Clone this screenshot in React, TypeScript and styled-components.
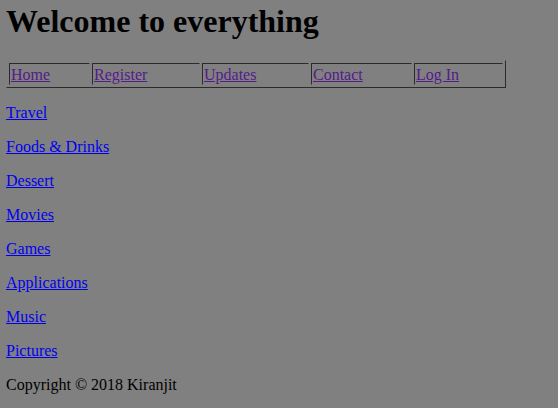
import React from "react";
import styled, { createGlobalStyle } from "styled-components";

const GlobalStyle = createGlobalStyle`
  html, body {
    margin: 0;
    padding: 0;
    background: #808080;
  }
  body {
    font-family: "Liberation Serif", "Times New Roman", serif;
    font-size: 16px;
    color: #000;
  }
`;

const Page = styled.div`
  padding: 3px 6px 0 6px;
`;

const Title = styled.h1`
  font-size: 32px;
  font-weight: bold;
  margin: 0 0 20px 0;
`;

const NavTable = styled.table`
  width: 500px;
  border: 1px solid;
  border-color: #808080 #2b2b2b #2b2b2b #808080;
  border-spacing: 2px;
  border-collapse: separate;
`;

const NavCell = styled.td<{ $w: number }>`
  width: ${(p) => p.$w}px;
  padding: 2px 1px 0 1px;
  border: 1px solid;
  border-color: #2b2b2b #808080 #808080 #2b2b2b;
  text-align: left;
  vertical-align: middle;
  box-sizing: border-box;
`;

const NavLink = styled.a`
  color: #551a8b;
  text-decoration: underline;
`;

const Item = styled.p`
  margin: 16px 0;
`;

const CategoryLink = styled.a`
  color: #0000ee;
  text-decoration: underline;
`;

const Footer = styled.p`
  margin: 16px 0;
`;

const nav = [
  { label: "Home", w: 81 },
  { label: "Register", w: 108 },
  { label: "Updates", w: 107 },
  { label: "Contact", w: 101 },
  { label: "Log In", w: 89 },
];

const categories = [
  "Travel",
  "Foods & Drinks",
  "Dessert",
  "Movies",
  "Games",
  "Applications",
  "Music",
  "Pictures",
];

export default function App() {
  return (
    <>
      <GlobalStyle />
      <Page>
        <Title>Welcome to everything</Title>
        <NavTable>
          <tbody>
            <tr>
              {nav.map((n) => (
                <NavCell key={n.label} $w={n.w}>
                  <NavLink href="#">{n.label}</NavLink>
                </NavCell>
              ))}
            </tr>
          </tbody>
        </NavTable>
        {categories.map((c) => (
          <Item key={c}>
            <CategoryLink href="#">{c}</CategoryLink>
          </Item>
        ))}
        <Footer>Copyright © 2018 Kiranjit</Footer>
      </Page>
    </>
  );
}
